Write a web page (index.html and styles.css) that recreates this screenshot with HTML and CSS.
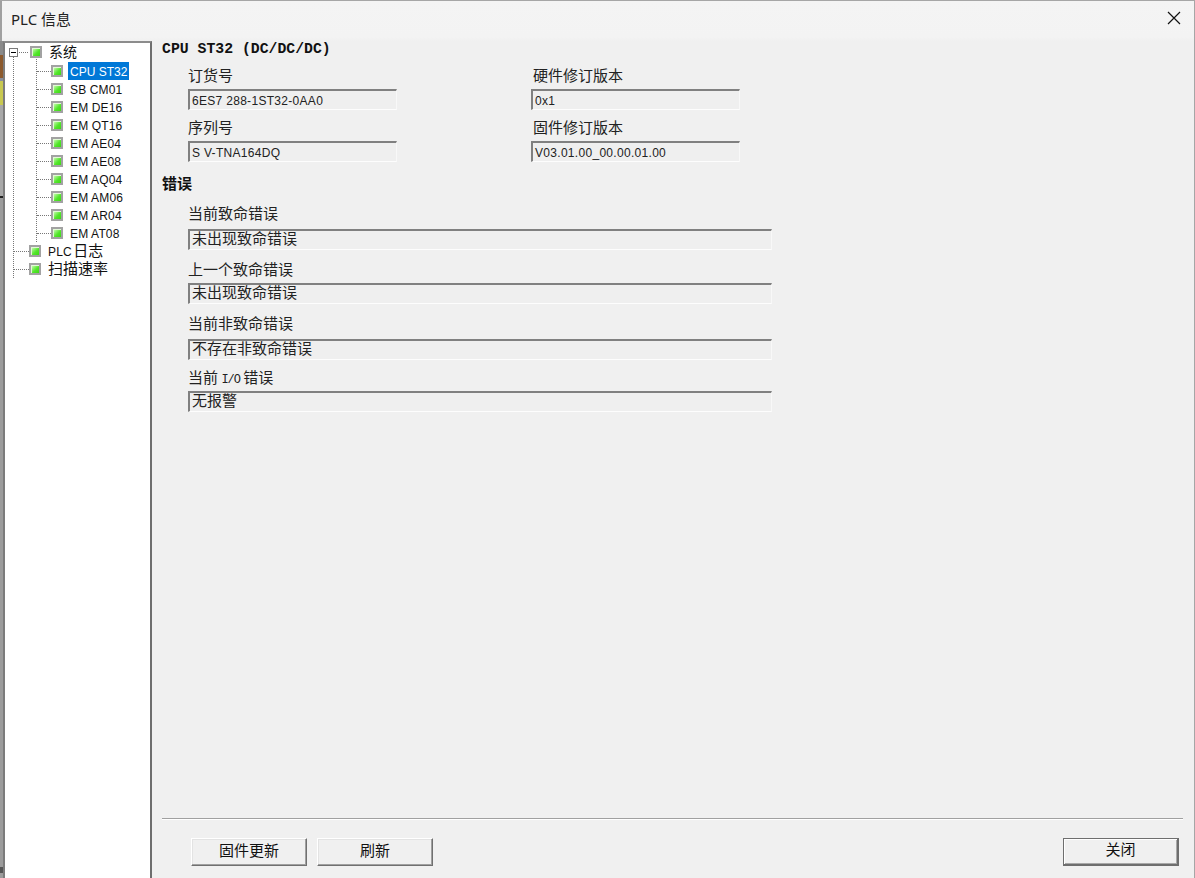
FILE: index.html
```html
<!DOCTYPE html>
<html lang="zh">
<head>
<meta charset="utf-8">
<title>PLC 信息</title>
<link rel="stylesheet" href="styles.css">
</head>
<body>
<div class="dialog">
  <header class="titlebar">
    <span class="title">PLC 信息</span>
    <svg class="close" width="14" height="14" viewBox="0 0 14 14"><path d="M1 1L13 13M13 1L1 13" stroke="#111" stroke-width="1.2" fill="none"/></svg>
  </header>
  <div class="content">
    <div class="edge"></div>
    <nav class="tree">
      <div class="row root">
        <span class="toggle"></span><span class="link short"></span><span class="led"></span><span class="label cjk">系统</span>
      </div>
      <div class="outer">
        <div class="inner">
          <div class="row child"><span class="link"></span><span class="led"></span><span class="label selected">CPU ST32</span></div>
          <div class="row child"><span class="link"></span><span class="led"></span><span class="label">SB CM01</span></div>
          <div class="row child"><span class="link"></span><span class="led"></span><span class="label">EM DE16</span></div>
          <div class="row child"><span class="link"></span><span class="led"></span><span class="label">EM QT16</span></div>
          <div class="row child"><span class="link"></span><span class="led"></span><span class="label">EM AE04</span></div>
          <div class="row child"><span class="link"></span><span class="led"></span><span class="label">EM AE08</span></div>
          <div class="row child"><span class="link"></span><span class="led"></span><span class="label">EM AQ04</span></div>
          <div class="row child"><span class="link"></span><span class="led"></span><span class="label">EM AM06</span></div>
          <div class="row child"><span class="link"></span><span class="led"></span><span class="label">EM AR04</span></div>
          <div class="row child last"><span class="link"></span><span class="led"></span><span class="label">EM AT08</span></div>
        </div>
        <div class="row top"><span class="link wide"></span><span class="led"></span><span class="label plc">PLC <span class="cjk log">日志</span></span></div>
        <div class="row top last"><span class="link wide"></span><span class="led"></span><span class="label cjk">扫描速率</span></div>
      </div>
    </nav>
    <main class="main">
      <h2 class="heading cpu">CPU ST32 (DC/DC/DC)</h2>
      <div class="info-grid">
        <div class="field short-field"><label>订货号</label><div class="box small">6ES7 288-1ST32-0AA0</div></div>
        <div class="field short-field"><label>硬件修订版本</label><div class="box small">0x1</div></div>
        <div class="field short-field"><label>序列号</label><div class="box small">S V-TNA164DQ</div></div>
        <div class="field short-field"><label>固件修订版本</label><div class="box small">V03.01.00_00.00.01.00</div></div>
      </div>
      <h2 class="heading err">错误</h2>
      <div class="errors">
        <div class="field long-field roomy"><label>当前致命错误</label><div class="box">未出现致命错误</div></div>
        <div class="field long-field"><label>上一个致命错误</label><div class="box">未出现致命错误</div></div>
        <div class="field long-field roomy"><label>当前非致命错误</label><div class="box">不存在非致命错误</div></div>
        <div class="field long-field tight"><label>当前 <span class="io">I/O</span> 错误</label><div class="box">无报警</div></div>
      </div>
      <footer class="footer">
        <div class="actions">
          <button class="btn wide-btn">固件更新</button>
          <button class="btn refresh-btn">刷新</button>
        </div>
        <button class="btn close-btn">关闭</button>
      </footer>
    </main>
  </div>
</div>
</body>
</html>
```
FILE: styles.css
```css
* { box-sizing: border-box; }
html, body { margin: 0; height: 100%; overflow: hidden; }
body { background: #f0f0f0; font-family: "Noto Sans CJK SC", "Liberation Sans", sans-serif; color: #000; }
.dialog { width: 1195px; height: 878px; display: flex; flex-direction: column; background: #f0f0f0; border-top: 1px solid #a6a6a6; border-right: 1px solid #a6a6a6; }
.titlebar { height: 40px; flex: none; display: flex; align-items: center; justify-content: space-between; padding: 0 13px 6px 9px; border-left: 2px solid #a0a0a0; background: linear-gradient(#f4f4f4, #f3f3f3 90%, #f0f0f0); }
.title { font-size: 15px; color: #222; font-family: "Noto Sans", "Noto Sans CJK SC", sans-serif; }
.close { display: block; }
.content { flex: 1; display: flex; min-height: 0; }
.edge { width: 3px; flex: none; background: linear-gradient(#8a8a8a 0 14px, #8c5a2e 14px 37px, #8a8f9a 37px 40px, #c8c850 40px 64px, #a8a8a8 64px 155px, #222 155px 157px, #9c9c9c 157px 826px, #555 826px 832px, #9c9c9c 832px); }
.tree { width: 149px; flex: none; background: #fff; border-left: 2px solid #7c7c7c; border-top: 2px solid #8c8c8c; border-right: 2px solid #6e6e6e; font-family: "Liberation Sans", "Noto Sans CJK SC", sans-serif; font-size: 12px; }
.row { height: 18px; display: flex; align-items: center; }
.root { padding-left: 4px; }
.root .cjk { font-size: 14px; }
.toggle { width: 9px; height: 9px; border: 1px solid #7a7a7a; background: linear-gradient(#000, #000) center / 5px 1px no-repeat #fff; flex: none; }
.link { height: 0; border-top: 1px dotted #777; flex: none; }
.link.short { width: 9px; margin: 0 2px 0 1px; }
.link.wide { width: 15px; }
.led { width: 12px; height: 12px; flex: none; border: 2px solid #a2a2a2; background: linear-gradient(135deg, #dcffc8, #52e62a 60%, #3fd816); box-shadow: inset 1px 1px 0 #e2fad6; }
.label { margin-left: 5px; padding: 0 2px; height: 18px; line-height: 20px; white-space: nowrap; color: #111; letter-spacing: .15px; }
.label.plc { line-height: 18px; }
.log { margin-left: -2px; }
.cjk { font-family: "Noto Sans CJK SC", sans-serif; font-size: 15px; letter-spacing: 0; line-height: 16px; }
.selected { background: #0078d7; color: #fff; letter-spacing: 0; }
.outer { margin-left: 8px; margin-top: -5px; padding-top: 6px; border-left: 1px dotted #777; }
.inner { margin-left: 22px; margin-top: -5px; padding-top: 5px; border-left: 1px dotted #777; margin-bottom: 9px; }
.child .link { width: 14px; }
.child.last { margin-bottom: -9px; }
.top.last { margin-bottom: -9px; }
.main { flex: 1; display: flex; flex-direction: column; padding: 0 11px 12px 10px; min-width: 0; }
.heading { margin: 0; font-weight: 700; color: #111; }
.cpu { font-family: "Liberation Mono", monospace; font-size: 14.8px; height: 16px; line-height: 16px; }
.err { font-family: "Noto Sans CJK SC", sans-serif; font-size: 15px; height: 20px; line-height: 18px; margin-top: 12px; }
.info-grid { display: grid; grid-template-columns: 343px 209px; row-gap: 7px; padding-left: 26px; margin-top: 8px; }
.info-grid .field:nth-child(even) label { padding-left: 2px; }
.field label { display: block; font-size: 15px; line-height: 20px; height: 20px; color: #222; }
.box { height: 21px; margin-top: 4px; background: #efefef; border: 1px solid; border-color: #808080 #f8f8f8 #fdfdfd #808080; border-width: 2px 1px 1px 2px; padding-left: 2px; font-size: 15px; line-height: 13px; color: #222; white-space: nowrap; }
.box.small { font-family: "Liberation Sans", sans-serif; font-size: 12px; line-height: 20px; letter-spacing: .3px; }
.short-field { width: 209px; }
.long-field { width: 584px; margin-top: 9px; }
.long-field:first-child { margin-top: 0; }
.roomy .box { margin-top: 6px; }
.tight { margin-top: 7px; }
.errors { padding-left: 26px; margin-top: 9px; display: flex; flex-direction: column; }
.io { font-family: "Liberation Mono", monospace; font-size: 12px; letter-spacing: -1px; }
.footer { margin-top: auto; height: 48px; border-top: 1px solid #a0a0a0; box-shadow: inset 0 1px 0 #fff; display: flex; align-items: flex-end; justify-content: space-between; padding: 0 4px 0 29px; flex: none; }
.actions { display: flex; gap: 10px; }
.btn { height: 28px; font-family: "Noto Sans CJK SC", sans-serif; font-size: 15px; line-height: 20px; padding: 0 0 5px; color: #111; background: #f0f0f0; border: 1px solid; border-color: #fff #707070 #707070 #fff; box-shadow: inset -1px -1px 0 #a0a0a0, inset 1px 1px 0 #e3e3e3; }
.wide-btn, .refresh-btn, .close-btn { width: 116px; }
.close-btn { border-color: #6e6e6e; border-width: 1px 2px 2px 1px; box-shadow: inset 1px 1px 0 #fff, inset -1px -1px 0 #a8a8a8; }
```
